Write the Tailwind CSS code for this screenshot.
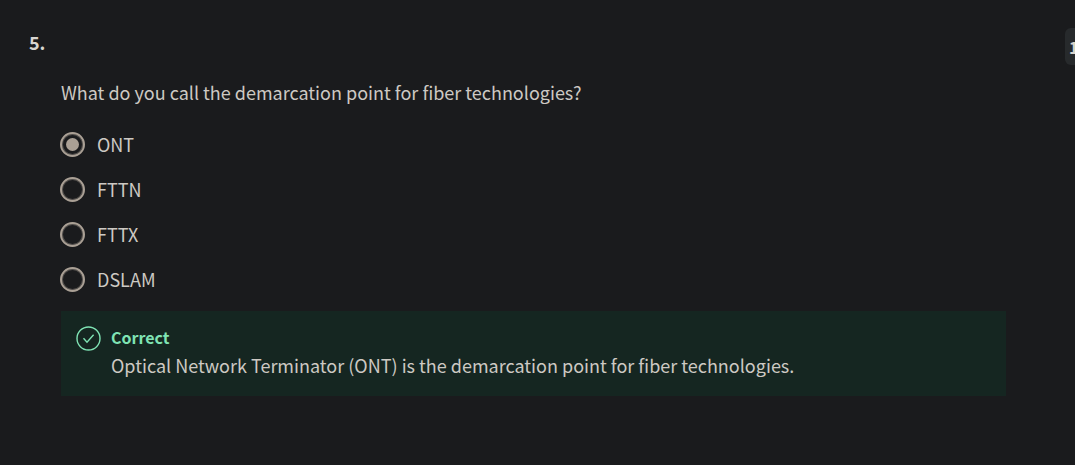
<!DOCTYPE html>
<html lang="en">
<head>
<meta charset="utf-8">
<meta name="viewport" content="width=device-width, initial-scale=1">
<title>Question 5</title>
<script src="https://cdn.jsdelivr.net/npm/@tailwindcss/browser@4"></script>
</head>
<body class="min-h-screen overflow-x-hidden bg-[#1a1b1d] font-['Noto_Sans_CJK_SC','Noto_Sans',sans-serif] text-lg leading-7 text-[#cdc9c3]">
<main class="overflow-hidden pt-7">
  <header class="flex h-[37px] items-start justify-between pl-[29px]">
    <h2 class="font-bold text-[#d8d5d0]">5.</h2>
    <div class="-mr-16 flex h-full w-[74px] items-center rounded-md bg-[#272a2c] pl-1 text-base font-bold whitespace-nowrap text-[#d8d5d0]">1 point</div>
  </header>
  <form class="mr-[69px] ml-[61px] pt-[13px]">
    <fieldset>
      <legend>What do you call the demarcation point for fiber technologies?</legend>
      <div class="-ml-px flex flex-col gap-[17px] pt-6 pb-[18px]">
        <label class="flex items-center gap-3"><input type="radio" name="answer" checked class="grid size-[25px] shrink-0 appearance-none place-items-center rounded-full border-2 border-[#aaa095] inset-ring-1 inset-ring-[#aaa095]/40 before:size-[13px] before:rounded-full before:bg-[#aaa095] before:opacity-0 checked:before:opacity-100">ONT</label>
        <label class="flex items-center gap-3"><input type="radio" name="answer" class="grid size-[25px] shrink-0 appearance-none place-items-center rounded-full border-2 border-[#aaa095] inset-ring-1 inset-ring-[#aaa095]/40 before:size-[13px] before:rounded-full before:bg-[#aaa095] before:opacity-0 checked:before:opacity-100">FTTN</label>
        <label class="flex items-center gap-3"><input type="radio" name="answer" class="grid size-[25px] shrink-0 appearance-none place-items-center rounded-full border-2 border-[#aaa095] inset-ring-1 inset-ring-[#aaa095]/40 before:size-[13px] before:rounded-full before:bg-[#aaa095] before:opacity-0 checked:before:opacity-100">FTTX</label>
        <label class="flex items-center gap-3"><input type="radio" name="answer" class="grid size-[25px] shrink-0 appearance-none place-items-center rounded-full border-2 border-[#aaa095] inset-ring-1 inset-ring-[#aaa095]/40 before:size-[13px] before:rounded-full before:bg-[#aaa095] before:opacity-0 checked:before:opacity-100">DSLAM</label>
      </div>
    </fieldset>
    <section class="flex items-start gap-[10px] bg-[#152621] px-[15px] pt-3 pb-[17px]">
      <svg class="mt-[3px] size-[25px] shrink-0" viewBox="0 0 25 25" fill="none" stroke="#7fe3b4" stroke-width="1.4" aria-hidden="true"><circle cx="12.5" cy="12.5" r="11.5"/><path d="M7.5 12.3 11 16.2 17.6 8.8"/></svg>
      <div>
        <h3 class="text-base leading-7 font-bold text-[#7fe3b4]">Correct</h3>
        <p>Optical Network Terminator (ONT) is the demarcation point for fiber technologies.</p>
      </div>
    </section>
  </form>
</main>
</body>
</html>
